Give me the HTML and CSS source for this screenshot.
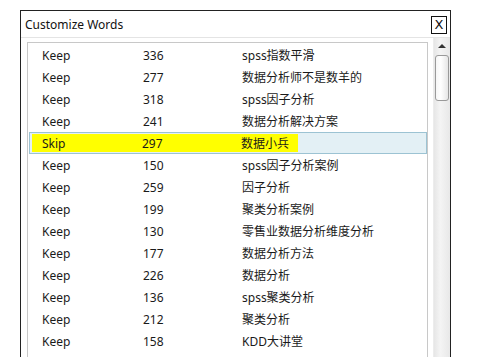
FILE: index.html
```html
<!DOCTYPE html>
<html lang="en">
<head>
  <meta charset="UTF-8">
  <title>Customize Words</title>
  <link rel="stylesheet" href="styles.css">
</head>
<body>
  <div class="dialog">
    <div class="titlebar">
      <span class="title">Customize Words</span>
      <button class="close">X</button>
    </div>
    <div class="content">
      <div class="listbox">
        <div class="row"><span class="c1">Keep</span><span class="c2">336</span><span class="c3">spss指数平滑</span></div>
        <div class="row"><span class="c1">Keep</span><span class="c2">277</span><span class="c3">数据分析师不是数羊的</span></div>
        <div class="row"><span class="c1">Keep</span><span class="c2">318</span><span class="c3">spss因子分析</span></div>
        <div class="row"><span class="c1">Keep</span><span class="c2">241</span><span class="c3">数据分析解决方案</span></div>
        <div class="row selected"><div class="mark"><span class="c1">Skip</span><span class="c2">297</span><span class="c3">数据小兵</span></div></div>
        <div class="row"><span class="c1">Keep</span><span class="c2">150</span><span class="c3">spss因子分析案例</span></div>
        <div class="row"><span class="c1">Keep</span><span class="c2">259</span><span class="c3">因子分析</span></div>
        <div class="row"><span class="c1">Keep</span><span class="c2">199</span><span class="c3">聚类分析案例</span></div>
        <div class="row"><span class="c1">Keep</span><span class="c2">130</span><span class="c3">零售业数据分析维度分析</span></div>
        <div class="row"><span class="c1">Keep</span><span class="c2">177</span><span class="c3">数据分析方法</span></div>
        <div class="row"><span class="c1">Keep</span><span class="c2">226</span><span class="c3">数据分析</span></div>
        <div class="row"><span class="c1">Keep</span><span class="c2">136</span><span class="c3">spss聚类分析</span></div>
        <div class="row"><span class="c1">Keep</span><span class="c2">212</span><span class="c3">聚类分析</span></div>
        <div class="row"><span class="c1">Keep</span><span class="c2">158</span><span class="c3">KDD大讲堂</span></div>
      </div>
      <div class="scrollbar">
        <div class="arrow"></div>
        <div class="thumb"></div>
      </div>
    </div>
  </div>
</body>
</html>
```

FILE: styles.css
```css
html, body {
  margin: 0;
  padding: 0;
  background: #fff;
  height: 100%;
  overflow: hidden;
}
body {
  font-family: 'Noto Sans', 'Noto Sans CJK SC', sans-serif;
  font-size: 12px;
  color: #1a1a1a;
}
.dialog {
  margin: 10px 0 0 20px;
  width: 431px;
  height: calc(100vh - 10px);
  border: 1px solid #222;
  border-bottom: none;
  box-sizing: border-box;
  display: flex;
  flex-direction: column;
  overflow: hidden;
}
.titlebar {
  height: 26px;
  flex: none;
  display: flex;
  align-items: center;
  justify-content: space-between;
  padding: 0 3px 0 4px;
  border-bottom: 1px solid #e4e4e4;
}
.title {
  font-size: 12px;
  color: #111;
}
.close {
  width: 16px;
  height: 18px;
  border: 1px solid #111;
  background: #fff;
  padding: 0;
  font-family: 'DejaVu Sans', sans-serif;
  font-size: 13px;
  line-height: 16px;
  color: #111;
  margin-top: 2px;
}
.content {
  flex: 1;
  display: flex;
  align-items: stretch;
  min-height: 0;
}
.listbox {
  margin: 4px 0 0 6px;
  width: 402px;
  border: 1px solid #c8c8c8;
  border-bottom: none;
  box-sizing: border-box;
  padding-top: 1px;
  overflow: hidden;
}
.row, .mark {
  height: 22px;
  display: flex;
  align-items: center;
}
.row .c1 { width: 101px; padding-left: 14px; }
.row .c2 { width: 99px; }
.row.selected {
  margin: 0 0 0 1px;
  width: 398px;
  box-sizing: border-box;
  background: #e3f0f5;
  border: 1px solid #9cc3d3;
}
.row.selected .mark {
  background: #ffff00;
  width: 266px;
  height: 18px;
  margin-left: 2px;
}
.row.selected .c1 { width: 100px; padding-left: 10px; }
.scrollbar {
  margin-left: 5px;
  width: 17px;
  background: linear-gradient(to right, #e6e6e6, #f4f4f4 40%, #e8e8e8);
  border-left: 1px solid #ececec;
  box-sizing: border-box;
}
.arrow {
  width: 0;
  height: 0;
  margin: 6px auto 0;
  border-left: 4px solid transparent;
  border-right: 4px solid transparent;
  border-bottom: 4px solid #333;
}
.thumb {
  margin: 7px 1px 0 1px;
  height: 44px;
  border: 1px solid #9a9a9a;
  border-radius: 3px;
  background: linear-gradient(to right, #f6f6f6, #fff 40%, #e6e6e6);
}
```
